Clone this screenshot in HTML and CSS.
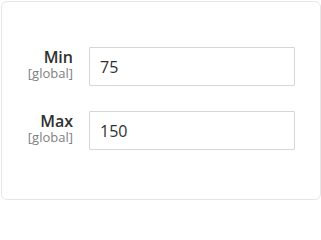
FILE: index.html
```html
<!DOCTYPE html>
<html>
<head>
<meta charset="utf-8">
<link rel="stylesheet" href="styles.css">
</head>
<body>
<div class="card">
  <div class="field">
    <label class="label" for="min">
      <span class="name">Min</span>
      <span class="scope">[global]</span>
    </label>
    <input class="input" id="min" type="text" value="75">
  </div>
  <div class="field">
    <label class="label" for="max">
      <span class="name">Max</span>
      <span class="scope">[global]</span>
    </label>
    <input class="input" id="max" type="text" value="150">
  </div>
</div>
</body>
</html>
```
FILE: styles.css
```css
html, body {
  margin: 0;
  padding: 0;
  background: #ffffff;
}
body {
  font-family: "Open Sans", "DejaVu Sans", sans-serif;
}
.card {
  box-sizing: border-box;
  margin: 1px 0 0 1px;
  width: 320px;
  height: 199px;
  border: 1px solid #e6e6e6;
  border-radius: 6px;
  padding: 45px 0 0 0;
  display: flex;
  flex-direction: column;
  gap: 25px;
}
.field {
  display: grid;
  grid-template-columns: 71px 206px;
  column-gap: 16px;
  align-items: start;
}
.label {
  display: flex;
  flex-direction: column;
  align-items: flex-end;
  padding-top: 1px;
}
.name {
  font-size: 16px;
  line-height: 18px;
  font-weight: 600;
  color: #303030;
}
.scope {
  font-size: 13px;
  line-height: 14px;
  color: #808080;
}
.input {
  box-sizing: border-box;
  width: 206px;
  height: 39px;
  margin: 0;
  border: 1px solid #d6d6d6;
  border-radius: 1px;
  padding: 0 10px;
  font-family: "Open Sans", "DejaVu Sans", sans-serif;
  font-size: 16px;
  color: #303030;
  background: #ffffff;
  outline: none;
}
```
